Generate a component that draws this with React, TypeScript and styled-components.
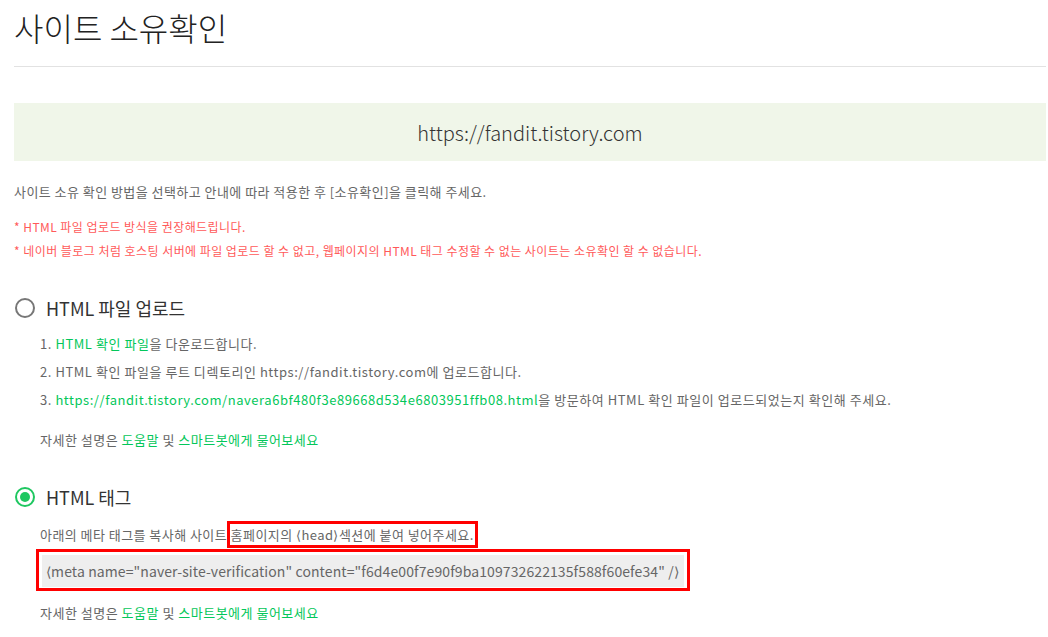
import styled, { createGlobalStyle } from "styled-components";

const GlobalStyle = createGlobalStyle`
  body {
    margin: 0;
    background: #fff;
    font-family: "Noto Sans CJK KR", "Noto Sans", sans-serif;
    color: #666;
  }
`;

const App = () => {
  return (
    <Page>
      <GlobalStyle />
      <Title>사이트 소유확인</Title>
      <Divider />
      <SiteBox>https://fandit.tistory.com</SiteBox>
      <Desc>사이트 소유 확인 방법을 선택하고 안내에 따라 적용한 후 [소유확인]을 클릭해 주세요.</Desc>
      <Notice>
        <p>* HTML 파일 업로드 방식을 권장해드립니다.</p>
        <p>* 네이버 블로그 처럼 호스팅 서버에 파일 업로드 할 수 없고, 웹페이지의 HTML 태그 수정할 수 없는 사이트는 소유확인 할 수 없습니다.</p>
      </Notice>

      <Option>
        <RadioRow>
          <Radio />
          <RadioLabel>HTML 파일 업로드</RadioLabel>
        </RadioRow>
        <Steps>
          <li>
            1. <Link>HTML 확인 파일</Link>을 다운로드합니다.
          </li>
          <li>2. HTML 확인 파일을 루트 디렉토리인 https://fandit.tistory.com에 업로드합니다.</li>
          <li>
            3. <Link>https://fandit.tistory.com/navera6bf480f3e89668d534e6803951ffb08.html</Link>을 방문하여 HTML 확인
            파일이 업로드되었는지 확인해 주세요.
          </li>
        </Steps>
        <Help>
          자세한 설명은 <Link>도움말</Link> 및 <Link>스마트봇에게 물어보세요</Link>
        </Help>
      </Option>

      <Option $second>
        <RadioRow>
          <Radio $checked />
          <RadioLabel>HTML 태그</RadioLabel>
        </RadioRow>
        <TagGuide>
          아래의 메타 태그를 복사해 사이트 <Marked>홈페이지의 ⟨head⟩섹션에 붙여 넣어주세요.</Marked>
        </TagGuide>
        <CodeFrame>
          <Code>⟨meta name="naver-site-verification" content="f6d4e00f7e90f9ba109732622135f588f60efe34" /⟩</Code>
        </CodeFrame>
        <Help $tight>
          자세한 설명은 <Link>도움말</Link> 및 <Link>스마트봇에게 물어보세요</Link>
        </Help>
      </Option>
    </Page>
  );
};

export default App;

const Page = styled.div`
  padding: 0 2px 0 14px;
`;

const Title = styled.h1`
  margin: 0;
  padding-top: 7px;
  font-size: 32px;
  line-height: 40px;
  font-weight: 300;
  color: #222;
`;

const Divider = styled.hr`
  margin: 19px 0 0;
  border: 0;
  border-top: 1px solid #e2e2e2;
`;

const SiteBox = styled.div`
  margin-top: 36px;
  height: 58px;
  display: flex;
  align-items: center;
  justify-content: center;
  background: #f0f6e9;
  font-size: 20px;
  font-weight: 300;
  color: #333;
`;

const Desc = styled.p`
  margin: 21px 0 0;
  font-size: 13px;
  line-height: 20px;
  letter-spacing: 0.45px;
  color: #666;
`;

const Notice = styled.div`
  margin-top: 13px;

  p {
    margin: 0;
    font-size: 12px;
    line-height: 24px;
    letter-spacing: 0.45px;
    color: #ff5a5a;
  }
`;

const Option = styled.section<{ $second?: boolean }>`
  margin-top: ${(p) => (p.$second ? "35px" : "33px")};
`;

const RadioRow = styled.div`
  display: flex;
  align-items: center;
  gap: 11px;
  height: 24px;
  padding-left: 1px;
`;

const Radio = styled.span<{ $checked?: boolean }>`
  position: relative;
  width: 20px;
  height: 20px;
  box-sizing: border-box;
  border-radius: 50%;
  border: 2px solid ${(p) => (p.$checked ? "#1ec760" : "#777")};

  &::after {
    content: "";
    display: ${(p) => (p.$checked ? "block" : "none")};
    position: absolute;
    left: 3px;
    top: 3px;
    width: 10px;
    height: 10px;
    border-radius: 50%;
    background: #1ec760;
  }
`;

const RadioLabel = styled.span`
  font-size: 18px;
  color: #333;
`;

const Steps = styled.ol`
  list-style: none;
  margin: 10px 0 0;
  padding: 0 0 0 26px;

  li {
    font-size: 13px;
    line-height: 28px;
    letter-spacing: 0.55px;
    color: #666;
  }
`;

const Link = styled.a`
  color: #03c75a;
  text-decoration: none;
`;

const Help = styled.p<{ $tight?: boolean }>`
  margin: ${(p) => (p.$tight ? "12px" : "16px")} 0 0 26px;
  font-size: 13px;
  line-height: 20px;
  letter-spacing: 0.5px;
  color: #666;
`;

const TagGuide = styled.p`
  margin: 16px 0 0 26px;
  font-size: 13px;
  line-height: 20px;
  letter-spacing: 0.45px;
  color: #666;
`;

const Marked = styled.span`
  outline: 3px solid #f00;
  outline-offset: 1px;
`;

const CodeFrame = styled.div`
  margin: 4px 0 0 22px;
  width: fit-content;
  border: 3px solid #f00;
  padding: 3px 3px 1px 3px;
`;

const Code = styled.div`
  height: 32px;
  line-height: 32px;
  padding: 0 5px 0 4px;
  background: #eee;
  font-size: 14px;
  letter-spacing: 0.1px;
  color: #666;
`;
